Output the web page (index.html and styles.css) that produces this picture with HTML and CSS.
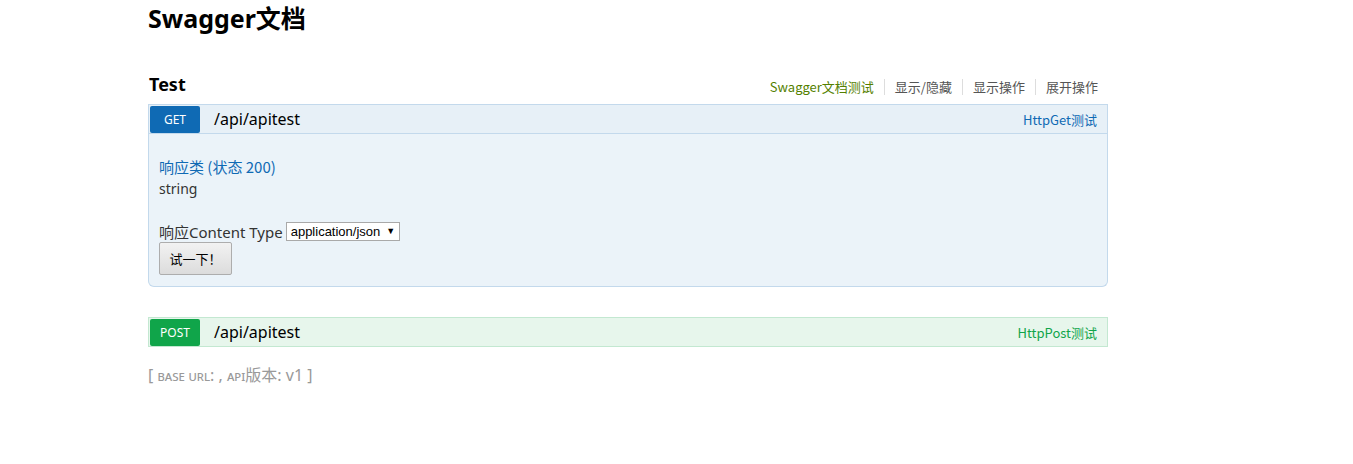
FILE: index.html
```html
<!DOCTYPE html>
<html lang="zh">
<head>
<meta charset="utf-8">
<title>Swagger文档</title>
<link rel="stylesheet" href="styles.css">
</head>
<body>
<div class="page">
  <h1 class="title">Swagger文档</h1>
  <div class="resource">
    <div class="res-head">
      <h2 class="res-name">Test</h2>
      <ul class="res-links">
        <li class="link-green">Swagger文档测试</li>
        <li>显示/隐藏</li>
        <li>显示操作</li>
        <li>展开操作</li>
      </ul>
    </div>
    <div class="op op-get">
      <div class="op-head">
        <span class="verb">GET</span>
        <span class="path">/api/apitest</span>
        <span class="summary">HttpGet测试</span>
      </div>
      <div class="op-body">
        <div class="resp-title">响应类 (状态 200)</div>
        <div class="resp-type">string</div>
        <div class="ctype">
          <span>响应Content Type</span>
          <span class="select">application/json <span class="arrow">▼</span></span>
        </div>
        <button class="try">试一下！</button>
      </div>
    </div>
    <div class="op op-post">
      <div class="op-head">
        <span class="verb">POST</span>
        <span class="path">/api/apitest</span>
        <span class="summary">HttpPost测试</span>
      </div>
    </div>
  </div>
  <div class="footer">[ <span class="sc">base url</span>: , <span class="sc">api</span>版本: v1 ]</div>
</div>
</body>
</html>
```
FILE: styles.css
```css
* { box-sizing: border-box; }
html, body { margin: 0; padding: 0; background: #fff; }
body {
  font-family: "Noto Sans", "Noto Sans CJK SC", sans-serif;
  color: #000;
}
.page {
  width: 960px;
  margin-left: 148px;
}
.title {
  margin: 0;
  font-size: 25px;
  line-height: 36px;
  font-weight: bold;
  font-family: "Noto Sans", "Noto Sans CJK SC", sans-serif;
}
.resource { margin-top: 33px; }
.res-head {
  display: flex;
  align-items: flex-end;
  justify-content: space-between;
  height: 35px;
  padding-bottom: 9px;
}
.res-name {
  margin: 0;
  font-size: 18px;
  font-weight: bold;
  line-height: 24px;
  padding-left: 1px;
  position: relative;
  top: 1px;
}
.res-links {
  display: flex;
  list-style: none;
  margin: 0 10px 0 0;
  padding: 0;
  font-size: 13px;
  line-height: 16px;
  color: #555;
  font-family: "Noto Sans CJK SC", sans-serif;
}
.res-links li {
  padding: 0 10px;
  border-left: 1px solid #ddd;
}
.res-links li:first-child { border-left: none; }
.res-links li:last-child { padding-right: 0; }
.res-links .link-green { color: #547f00; }
.op { margin-bottom: 30px; }
.op-post { margin-bottom: 18px; }
.op-head {
  display: flex;
  align-items: center;
  height: 30px;
  padding: 1px;
  border: 1px solid;
}
.op-get .op-head { background: #e7f0f7; border-color: #c3d9ec; }
.op-post .op-head { background: #e7f6ec; border-color: #c3e8d1; }
.verb {
  width: 50px;
  height: 27px;
  display: flex;
  align-items: center;
  justify-content: center;
  color: #fff;
  font-size: 12px;
  border-radius: 2px;
}
.op-get .verb { background: #0f6ab4; }
.op-post .verb { background: #10a54a; }
.path {
  margin-left: 14px;
  font-size: 16px;
  color: #000;
}
.summary {
  margin-left: auto;
  margin-right: 9px;
  font-size: 13px;
  font-family: "Noto Sans CJK SC", sans-serif;
}
.op-get .summary { color: #0f6ab4; }
.op-post .summary { color: #10a54a; }
.op-body {
  background: #ebf3f9;
  border: 1px solid #c3d9ec;
  border-top: none;
  border-radius: 0 0 6px 6px;
  padding: 22px 10px 10px;
  height: 153px;
}
.resp-title {
  color: #0f6ab4;
  font-size: 15px;
  line-height: 22px;
  font-family: "Noto Sans CJK SC", sans-serif;
}
.resp-type {
  font-size: 14px;
  line-height: 22px;
  color: #333;
}
.ctype {
  margin-top: 21px;
  display: flex;
  align-items: center;
  gap: 3px;
  font-size: 15px;
  color: #333;
  height: 20px;
}
.select {
  display: inline-flex;
  align-items: center;
  height: 19px;
  border: 1px solid #a9a9a9;
  background: #fff;
  font-size: 13px;
  color: #000;
  padding: 0 4px;
  font-family: "Liberation Sans", sans-serif;
}
.select .arrow { font-size: 9px; margin-left: 6px; }
.try {
  display: block;
  margin-top: 1px;
  width: 73px;
  height: 33px;
  font-size: 13px;
  font-family: "Noto Sans CJK SC", sans-serif;
  color: #000;
  background: linear-gradient(#f2f2f2, #dcdcdc);
  border: 1px solid #adadad;
  border-radius: 2px;
  padding: 0;
}
.footer {
  font-size: 16px;
  line-height: 20px;
  color: #999;
  font-weight: normal;
  font-family: "Noto Sans", "Noto Sans CJK SC", sans-serif;
}
.footer .sc { font-variant: small-caps; font-size: 14px; }
```
